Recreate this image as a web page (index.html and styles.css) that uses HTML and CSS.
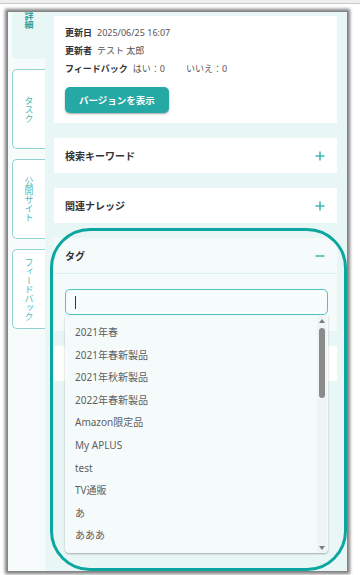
FILE: index.html
```html
<!DOCTYPE html>
<html lang="ja">
  <head>
    <meta charset="UTF-8">
    <meta name="viewport" content="width=device-width, initial-scale=1">
    <title>ナレッジ詳細</title>
    <link rel="stylesheet" href="styles.css">
  </head>
  <body>
    <div class="topbar"></div>
    <div class="frame">
      <nav class="tabs">
        <div class="tab active"><span>詳細</span></div>
        <div class="tab"><span>タスク</span></div>
        <div class="tab"><span>公開サイト</span></div>
        <div class="tab"><span>フィードバック</span></div>
      </nav>
      <main class="panel">
        <section class="card info">
          <div class="row"><b>更新日</b><span>2025/06/25 16:07</span></div>
          <div class="row"><b>更新者</b><span>テスト 太郎</span></div>
          <div class="row"><b>フィードバック</b><span class="yes">はい：0</span><span>いいえ：0</span></div>
          <button class="version-btn">バージョンを表示</button>
        </section>
        <section class="card acc">
          <h3>検索キーワード</h3>
          <svg class="acc-icon" viewBox="0 0 10 10"><path d="M5 0.5v9M0.5 5h9"/></svg>
        </section>
        <section class="card acc">
          <h3>関連ナレッジ</h3>
          <svg class="acc-icon" viewBox="0 0 10 10"><path d="M5 0.5v9M0.5 5h9"/></svg>
        </section>
        <section class="card tag-card">
          <div class="acc">
            <h3>タグ</h3>
            <svg class="acc-icon" viewBox="0 0 10 10"><path d="M0.5 5h9"/></svg>
          </div>
          <div class="tag-body">
            <div class="tag-field">
              <div class="tag-input"><span class="caret"></span></div>
              <div class="tag-list">
                <ul>
                  <li>2021年春</li>
                  <li>2021年春新製品</li>
                  <li>2021年秋新製品</li>
                  <li>2022年春新製品</li>
                  <li>Amazon限定品</li>
                  <li>My APLUS</li>
                  <li>test</li>
                  <li>TV通販</li>
                  <li>あ</li>
                  <li>あああ</li>
                </ul>
                <div class="scroll">
                  <span class="arrow up"></span>
                  <span class="thumb"></span>
                  <span class="arrow down"></span>
                </div>
              </div>
            </div>
          </div>
        </section>
        <section class="card acc"></section>
      </main>
    </div>
    <div class="highlight"></div>
  </body>
</html>
```
FILE: styles.css
```css
body {
  margin: 0;
  padding: 0;
  position: relative;
  height: 575px;
  overflow: hidden;
  background: #fff;
  font-family: "Noto Sans", "Noto Sans CJK JP", sans-serif;
  color: #333;
}

.topbar {
  height: 3px;
  background: #eeeeee;
  border-bottom: 1px solid #c9c9c9;
}

.frame {
  display: flex;
  width: 339px;
  height: 559px;
  margin: 8px 0 0 8px;
  overflow: hidden;
  background: #f7fbfb;
  box-shadow: 0 0 3px 3px rgba(0, 0, 0, 0.5);
}

.tabs {
  width: 33px;
  padding-left: 4px;
  margin-top: -33px;
  display: flex;
  flex-direction: column;
  gap: 10px;
}

.tab {
  height: 80px;
  box-sizing: border-box;
  display: flex;
  justify-content: center;
  align-items: center;
  background: #fff;
  border: 1px solid #8fd4d0;
  border-right: none;
  border-radius: 5px 0 0 5px;
}

.tab span {
  writing-mode: vertical-rl;
  font-family: "Noto Sans CJK JP", sans-serif;
  font-size: 9px;
  line-height: 1;
  color: #52bbb6;
}

.tab.active {
  background: #e8f6f5;
  border-color: #e8f6f5;
}

.tab.active span {
  color: #2aa29d;
  font-weight: 700;
  margin-top: 2px;
}

.panel {
  flex: 1;
  padding: 4px 10px 0 9px;
  background: #e8f6f5;
  display: flex;
  flex-direction: column;
  gap: 15px;
}

.card {
  background: #fff;
}

.info {
  padding: 8px 11px 10px;
  font-size: 9px;
}

.info .row {
  display: flex;
  line-height: 18px;
}

.info .row b {
  margin-right: 5px;
  color: #333;
}

.info .row span {
  color: #555;
}

.info .row .yes {
  margin-right: 21px;
}

.version-btn {
  margin-top: 9px;
  height: 26px;
  padding: 0 14px;
  border: none;
  border-radius: 5px;
  background: #25a9a4;
  color: #fff;
  font-family: inherit;
  font-size: 9.5px;
  font-weight: 700;
  box-shadow: 0 1px 2px rgba(0, 0, 0, 0.35);
}

.acc {
  height: 35px;
  padding: 0 12px 0 11px;
  display: flex;
  align-items: center;
  justify-content: space-between;
}

.acc h3 {
  margin: 0;
  font-size: 10px;
  font-weight: 700;
  color: #333;
}

.acc-icon {
  width: 10px;
  height: 10px;
  fill: none;
  stroke: #3cb8b2;
  stroke-width: 1.5;
}

.tag-card {
  background: #f5fbfb;
}

.tag-card .acc {
  border-bottom: 1px solid #dcefee;
}

.tag-body {
  padding: 15px 9px 16px 11px;
}

.tag-field {
  position: relative;
}

.tag-input {
  height: 26px;
  box-sizing: border-box;
  border: 1.5px solid #4fc3bd;
  border-radius: 5px;
  background: #f7fcfc;
  display: flex;
  align-items: center;
  padding-left: 9px;
}

.caret {
  width: 1px;
  height: 13px;
  background: #333;
}

.tag-list {
  position: absolute;
  top: 27px;
  left: 0;
  right: 0;
  height: 237px;
  background: #f5fbfb;
  border-radius: 0 0 4px 4px;
  box-shadow: 0 1px 2px rgba(0, 0, 0, 0.3);
  z-index: 5;
  overflow: hidden;
}

.tag-list ul {
  list-style: none;
  margin: 0;
  padding: 5px 0 0 10px;
}

.tag-list li {
  line-height: 22.6px;
  font-size: 10px;
  color: #5e5e5e;
}

.scroll {
  position: absolute;
  top: 0;
  right: 1px;
  bottom: 0;
  width: 10px;
  background: #eff5f5;
}

.scroll .thumb {
  position: absolute;
  top: 12px;
  left: 2px;
  width: 6px;
  height: 70px;
  border-radius: 3px;
  background: #8b8b8b;
}

.scroll .arrow {
  position: absolute;
  left: 2px;
  width: 0;
  height: 0;
  border-left: 3px solid transparent;
  border-right: 3px solid transparent;
}

.scroll .up {
  top: 3px;
  border-bottom: 4px solid #7c7c7c;
}

.scroll .down {
  bottom: 3px;
  border-top: 4px solid #7c7c7c;
}

.highlight {
  position: absolute;
  left: 50px;
  top: 228px;
  width: 297px;
  height: 343px;
  box-sizing: border-box;
  border: 3px solid #0ca6a0;
  border-radius: 40px;
  z-index: 10;
}
```
